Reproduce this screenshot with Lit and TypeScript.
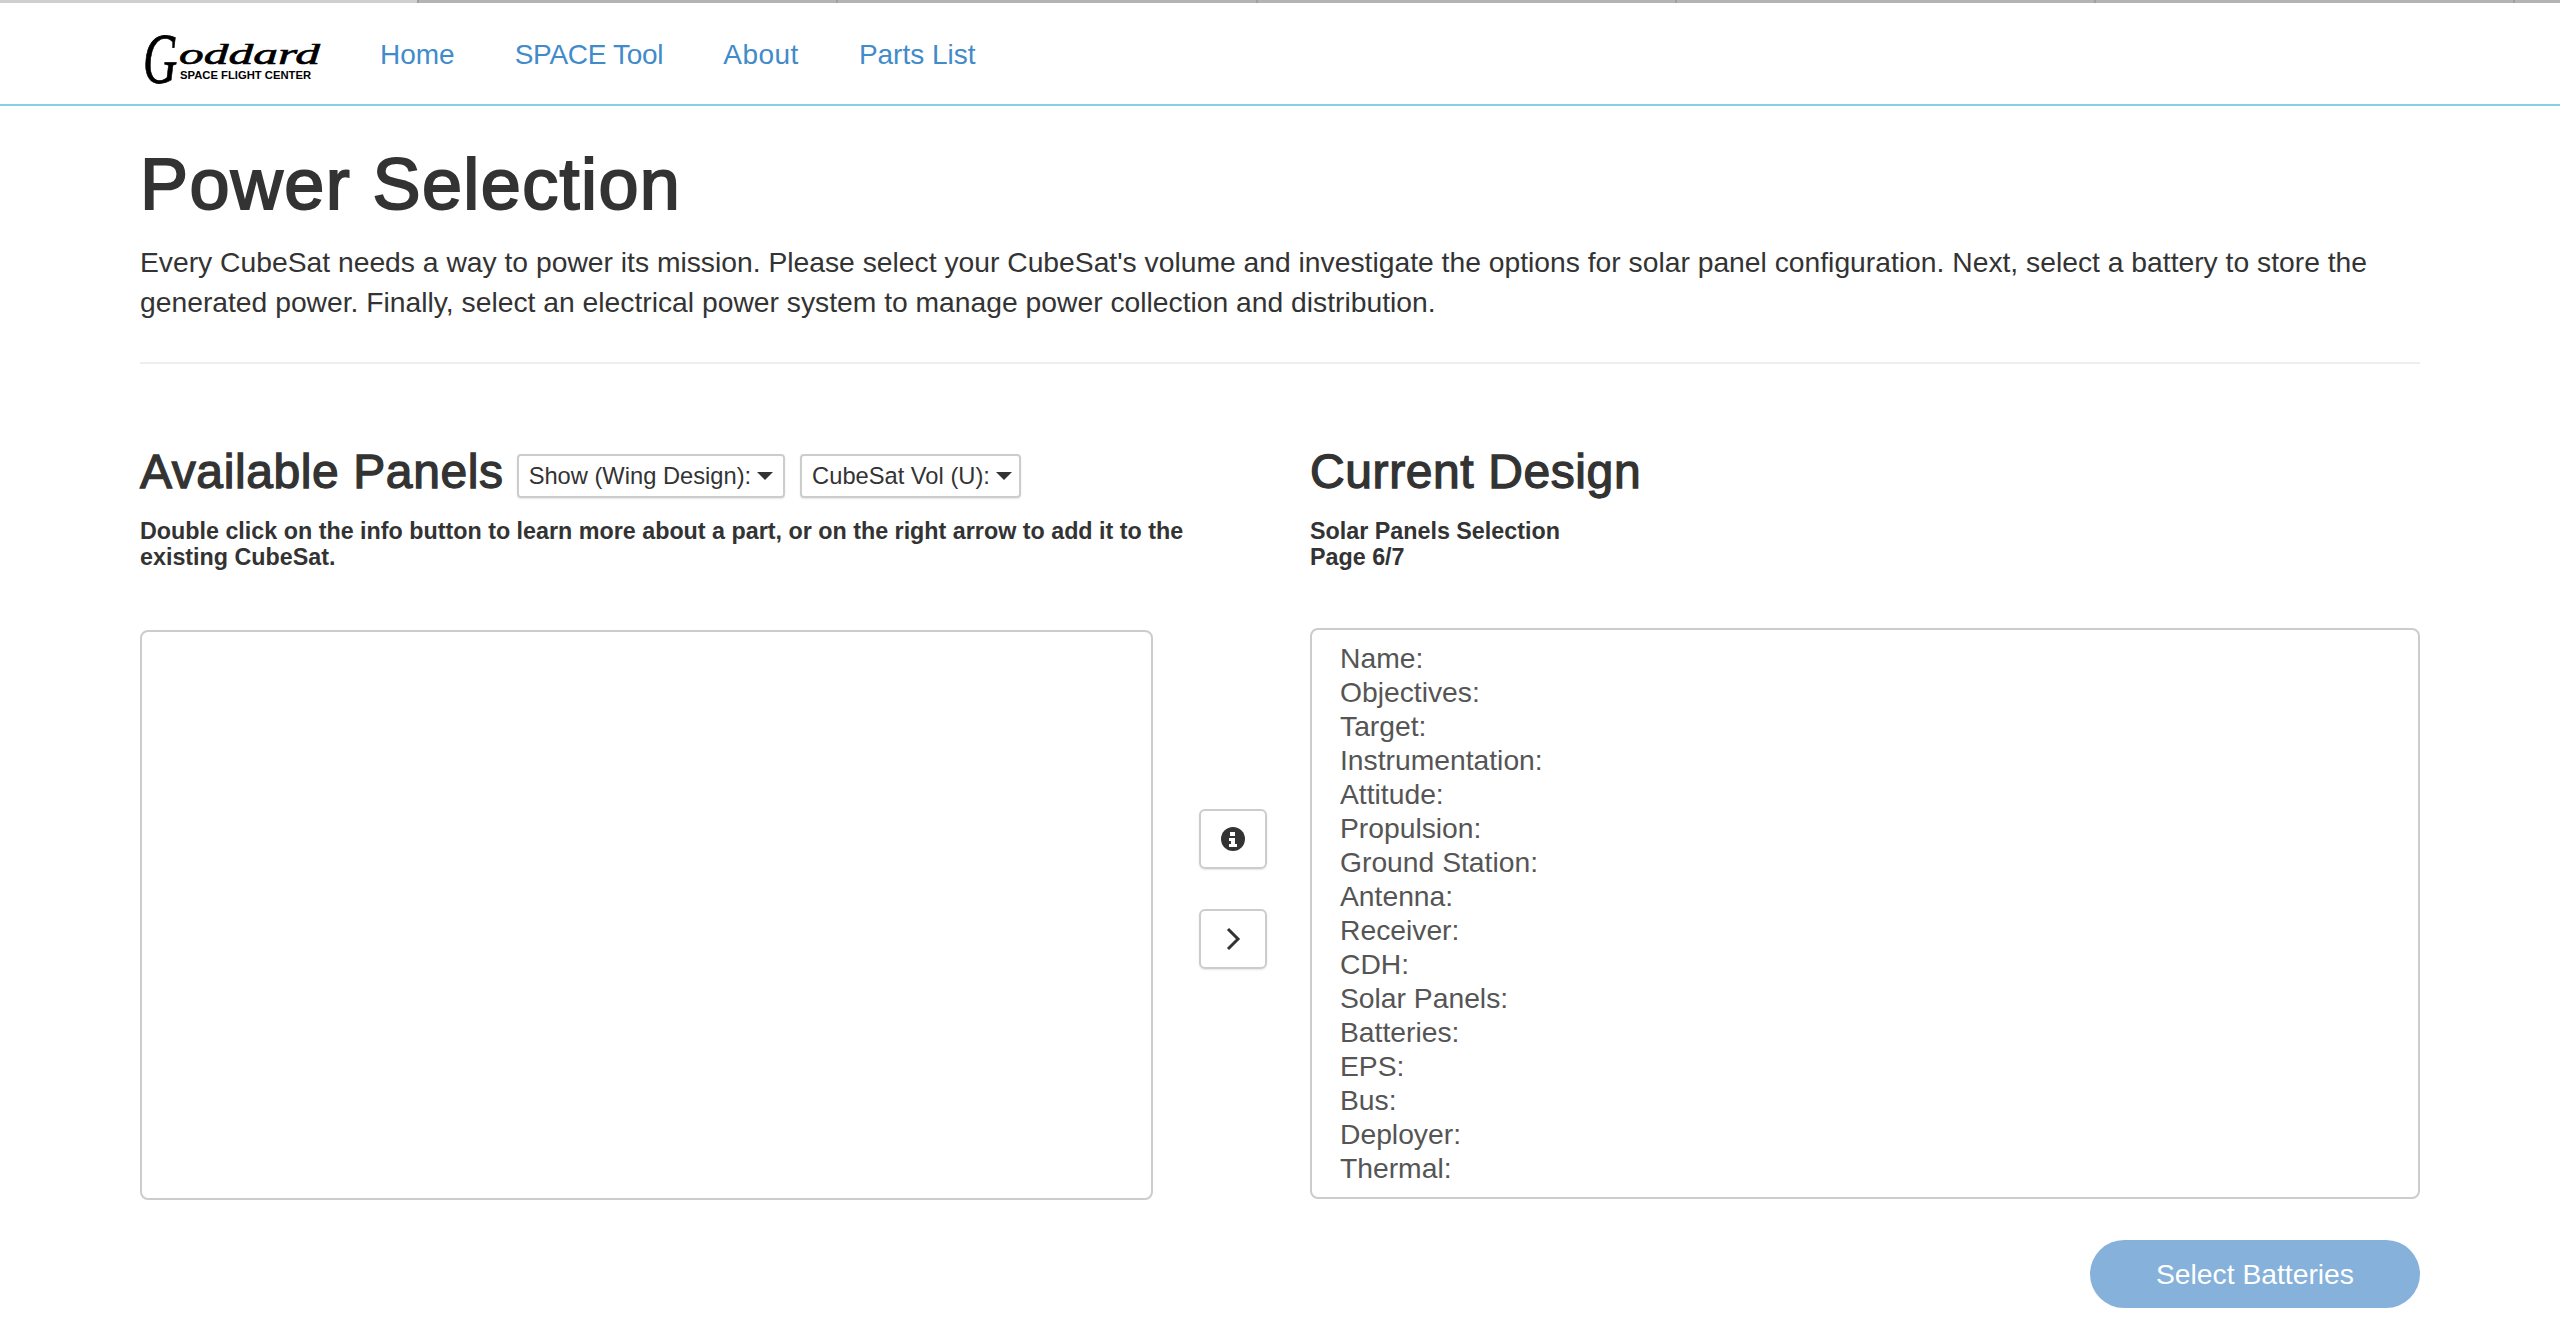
import {LitElement, html, css} from 'lit';
import {customElement} from 'lit/decorators.js';

const FIELDS = ['Name', 'Objectives', 'Target', 'Instrumentation', 'Attitude', 'Propulsion',
  'Ground Station', 'Antenna', 'Receiver', 'CDH', 'Solar Panels', 'Batteries', 'EPS', 'Bus',
  'Deployer', 'Thermal'];

const NAV = ['Home', 'SPACE Tool', 'About', 'Parts List'];

@customElement('app-root')
export class AppRoot extends LitElement {
  static styles = css`
    :host {
      display: block;
      min-height: 1342px;
      background: #fff;
      color: #333;
      font-family: "Liberation Sans", Arial, sans-serif;
      font-size: 28.27px;
      line-height: 40px;
    }
    .tabs {
      display: flex;
      height: 3px;
      background: #b4b4b4;
    }
    .tabs span {
      box-sizing: border-box;
      width: 419.2px;
      border-right: 2px solid #a0a0a0;
    }
    .tabs span:first-child {
      background: #cfcfcf;
    }
    nav {
      display: flex;
      align-items: center;
      height: 101px;
      padding-left: 140px;
      border-bottom: 2px solid #87ceeb;
      font-size: 28px;
    }
    .logo {
      width: 180px;
      height: 60px;
      display: block;
      margin-right: 60px;
      overflow: visible;
    }
    nav ul {
      display: flex;
      gap: 60px;
      margin: 2px 0 0;
      padding: 0;
      list-style: none;
    }
    nav li:nth-child(2) {
      letter-spacing: -.3px;
    }
    nav li:nth-child(3) {
      letter-spacing: .5px;
    }
    nav a {
      color: #428bca;
      text-decoration: none;
    }
    main {
      padding: 0 140px;
    }
    h1, h3 {
      font-weight: 400;
    }
    h1 {
      margin: 39px 0 18px;
      font-size: 72px;
      line-height: 79px;
      letter-spacing: 1.4px;
      -webkit-text-stroke: 2px #333;
    }
    .intro {
      margin: 0;
    }
    hr {
      margin: 40px 0 0;
      border: 0;
      border-top: 2px solid #eee;
    }
    .workspace {
      display: grid;
      grid-template-columns: 1013px 157px 1110px;
      margin-top: 82px;
    }
    .head {
      grid-column: 1 / span 2;
    }
    .title {
      display: flex;
      align-items: center;
      height: 52px;
    }
    h3 {
      margin: 0;
      font-size: 48px;
      line-height: 52px;
      letter-spacing: .6px;
      -webkit-text-stroke: 1.3px #333;
    }
    .drop {
      display: flex;
      align-items: center;
      gap: 6px;
      height: 44px;
      padding: 0 10px;
      margin: 7px 0 0 13px;
      border: 2px solid #ccc;
      border-radius: 4px;
      box-shadow: 0 1px 2px rgba(0, 0, 0, .1);
      font-size: 23.7px;
      box-sizing: border-box;
    }
    .drop + .drop {
      margin-left: 15px;
      padding-right: 7px;
    }
    .caret {
      width: 0;
      height: 0;
      border-top: 8px solid #333;
      border-left: 8px solid transparent;
      border-right: 8px solid transparent;
    }
    .note {
      margin: 20px 0 0;
      height: 110px;
      max-width: 1060px;
      font-size: 23.3px;
      font-weight: 700;
      line-height: 26px;
    }
    .box {
      border: 2px solid #ccc;
      border-radius: 8px;
      box-sizing: border-box;
    }
    .available {
      height: 570px;
      margin-top: 2px;
    }
    .actions {
      display: flex;
      flex-direction: column;
      align-items: center;
      gap: 40px;
      padding: 181px 0 0 2px;
    }
    .icon-btn {
      display: flex;
      align-items: center;
      justify-content: center;
      width: 68px;
      height: 60px;
      border: 2px solid #ccc;
      border-radius: 6px;
      box-shadow: 0 1px 2px rgba(0, 0, 0, .1);
      box-sizing: border-box;
    }
    .design {
      height: 571px;
      padding: 11px 28px;
      color: #555;
      line-height: 34px;
    }
    .footer {
      display: flex;
      justify-content: flex-end;
      margin-top: 40px;
    }
    .select {
      width: 330px;
      height: 68px;
      border-radius: 34px;
      background: #85b1da;
      color: #fff;
      display: flex;
      align-items: center;
      justify-content: center;
    }
  `;

  private logo() {
    return html`<svg class="logo" viewBox="0 0 180 60" aria-label="Goddard Space Flight Center">
      <text transform="translate(3 59) scale(.66 1)" font-family="Liberation Serif" font-style="italic"
        font-size="72" stroke="#000" stroke-width=".8">G</text>
      <text x="39" y="39.5" font-family="Liberation Serif" font-style="italic"
        font-size="30" textLength="141" lengthAdjust="spacingAndGlyphs" stroke="#000" stroke-width=".6">oddard</text>
      <text x="40" y="55" font-family="Liberation Sans" font-weight="700" font-size="10"
        textLength="131" lengthAdjust="spacingAndGlyphs">SPACE FLIGHT CENTER</text>
    </svg>`;
  }

  render() {
    return html`
      <div class="tabs">${[0, 1, 2, 3, 4, 5].map(() => html`<span></span>`)}</div>
      <nav>
        ${this.logo()}
        <ul>${NAV.map((item) => html`<li><a href="#">${item}</a></li>`)}</ul>
      </nav>
      <main>
        <h1>Power Selection</h1>
        <p class="intro">Every CubeSat needs a way to power its mission. Please select your CubeSat's volume and investigate the options for solar panel configuration. Next, select a battery to store the generated power. Finally, select an electrical power system to manage power collection and distribution.</p>
        <hr />
        <section class="workspace">
          <div class="head">
            <div class="title">
              <h3>Available Panels</h3>
              <div class="drop">Show (Wing Design): <span class="caret"></span></div>
              <div class="drop">CubeSat Vol (U): <span class="caret"></span></div>
            </div>
            <p class="note">Double click on the info button to learn more about a part, or on the right arrow to add it to the existing CubeSat.</p>
          </div>
          <div class="head-right">
            <div class="title"><h3>Current Design</h3></div>
            <p class="note">Solar Panels Selection<br />Page 6/7</p>
          </div>
          <div class="box available"></div>
          <div class="actions">
            <div class="icon-btn">
              <svg width="24" height="24" viewBox="0 0 24 24">
                <circle cx="12" cy="12" r="12" fill="#333"></circle>
                <path d="M9 5h5v4H9zM8 11h6v6h2v3H8v-3h2v-3H8z" fill="#fff"></path>
              </svg>
            </div>
            <div class="icon-btn">
              <svg width="16" height="24" viewBox="0 0 16 24">
                <path d="M3 2l10 10L3 22" fill="none" stroke="#333" stroke-width="3"></path>
              </svg>
            </div>
          </div>
          <div class="box design">
            ${FIELDS.map((field) => html`<div>${field}:</div>`)}
          </div>
        </section>
        <div class="footer"><div class="select">Select Batteries</div></div>
      </main>
    `;
  }
}
